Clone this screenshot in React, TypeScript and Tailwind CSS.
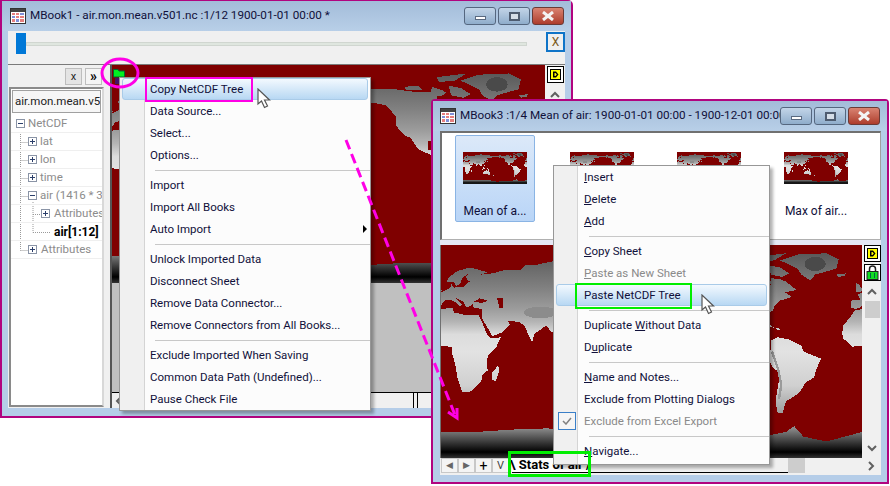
import type { ReactNode } from 'react';

type Pt = [number, number];

// rough coastlines in lon/lat, drawn twice so the map runs 0..360
const land: Pt[][] = [
  [[-9,37],[-9,43],[-1,44],[-4,48],[2,51],[8,54],[9,57],[11,54],[20,55],[24,59],[30,60],[23,60],[21,63],[24,66],[18,62],[17,58],[13,55],[11,59],[5,59],[6,62],[14,68],[25,71],[40,67],[34,65],[44,66],[55,69],[68,69],[72,73],[80,73],[100,77],[113,74],[130,71],[160,70],[180,69],[190,65],[178,62],[163,60],[156,52],[155,59],[142,59],[135,54],[141,52],[135,44],[128,40],[129,35],[126,35],[125,39],[121,40],[118,38],[122,31],[120,26],[110,21],[106,19],[109,13],[105,9],[100,13],[103,2],[100,5],[98,16],[94,17],[90,22],[80,15],[78,8],[73,18],[72,21],[67,25],[57,26],[59,23],[52,16],[44,13],[35,28],[35,36],[28,37],[27,40],[24,38],[22,37],[19,42],[13,45],[18,40],[16,38],[12,42],[8,44],[3,43],[0,39],[-2,37],[-6,36]],
  [[-6,35],[10,37],[11,33],[20,31],[32,31],[35,25],[39,15],[43,11],[51,12],[47,3],[40,-4],[39,-10],[40,-16],[35,-20],[35,-24],[30,-30],[25,-34],[18,-34],[14,-22],[12,-10],[9,0],[9,4],[-4,5],[-8,4],[-16,11],[-17,15],[-16,22],[-10,29]],
  [[49,-12],[50,-16],[47,-25],[44,-24],[44,-17]],
  [[-5,50],[1,51],[-2,56],[-5,58],[-5,54]],
  [[-22,65],[-14,66],[-15,64],[-20,63]],
  [[130,32],[136,34],[141,36],[141,41],[139,38],[132,35]],
  [[141,42],[145,44],[142,45]],
  [[95,5],[104,-3],[106,-6],[102,-4]],
  [[109,1],[116,7],[118,1],[115,-4],[110,-2]],
  [[105,-7],[115,-8],[114,-9],[106,-8]],
  [[120,0],[124,1],[122,-5],[120,-5]],
  [[131,-1],[141,-3],[148,-7],[150,-10],[141,-9],[133,-4]],
  [[120,18],[122,18],[125,8],[122,7]],
  [[114,-22],[122,-18],[129,-15],[131,-12],[136,-12],[136,-15],[140,-17],[142,-11],[146,-19],[153,-26],[150,-37],[145,-39],[138,-35],[131,-32],[124,-33],[115,-34]],
  [[173,-35],[178,-38],[175,-41],[168,-46],[167,-45],[172,-41]],
  [[-168,66],[-156,71],[-140,70],[-125,70],[-110,68],[-95,68],[-94,72],[-85,69],[-82,67],[-94,59],[-92,57],[-82,55],[-79,52],[-78,62],[-70,61],[-65,59],[-56,52],[-66,50],[-60,46],[-70,43],[-75,38],[-76,35],[-81,31],[-80,25],[-83,29],[-90,29],[-97,27],[-97,20],[-91,18],[-87,21],[-88,16],[-83,14],[-83,9],[-78,9],[-80,7],[-85,10],[-95,16],[-105,20],[-112,30],[-117,32],[-124,40],[-124,48],[-133,57],[-150,60],[-165,55],[-158,58],[-165,62]],
  [[-80,73],[-70,71],[-62,66],[-68,63],[-78,65]],
  [[-117,72],[-105,73],[-102,69],[-115,69]],
  [[-90,80],[-65,83],[-75,77],[-88,76]],
  [[-55,82],[-30,83],[-20,78],[-22,70],[-40,65],[-44,60],[-52,65],[-55,70],[-70,77]],
  [[-78,9],[-72,12],[-62,10],[-52,5],[-50,0],[-35,-6],[-39,-15],[-41,-22],[-48,-26],[-53,-34],[-58,-38],[-65,-42],[-68,-52],[-72,-52],[-74,-42],[-70,-18],[-76,-14],[-81,-5],[-78,2]],
  [[-84,22],[-75,20],[-78,22]],
  [[-74,20],[-69,19],[-72,18]],
];
const seas: Pt[][] = [
  [[28,42],[33,45],[40,43],[35,41]],
  [[48,45],[53,45],[53,37],[50,37]],
  [[-90,64],[-80,64],[-78,56],[-90,58]],
];
const antarctica: Pt[] = [[0,-68],[30,-68],[60,-66],[90,-65],[120,-66],[150,-68],[165,-72],[190,-77],[230,-74],[270,-73],[295,-68],[302,-63],[310,-72],[330,-76],[345,-72],[360,-68],[360,-90],[0,-90]];

const pts = (p: Pt[]) => p.map(([lon, lat]) => `${lon},${90 - lat}`).join(' ');

function WorldMap() {
  return (
    <svg viewBox="0 0 360 180" preserveAspectRatio="none" shapeRendering="crispEdges" className="block w-full h-full bg-[#7f0000]">
      <defs>
        <linearGradient id="landFill" gradientUnits="userSpaceOnUse" x1="0" y1="0" x2="0" y2="180">
          <stop offset="0.04" stopColor="#5a5a5a" />
          <stop offset="0.2" stopColor="#808080" />
          <stop offset="0.3" stopColor="#9c9c9c" />
          <stop offset="0.36" stopColor="#b4b4b4" />
          <stop offset="0.42" stopColor="#dcdcdc" />
          <stop offset="0.5" stopColor="#e2e2e2" />
          <stop offset="0.66" stopColor="#d0d0d0" />
          <stop offset="0.8" stopColor="#999999" />
        </linearGradient>
        <linearGradient id="iceFill" gradientUnits="userSpaceOnUse" x1="0" y1="155" x2="0" y2="180">
          <stop offset="0" stopColor="#8a8a8a" />
          <stop offset="0.5" stopColor="#333333" />
          <stop offset="0.8" stopColor="#000000" />
          <stop offset="1" stopColor="#333333" />
        </linearGradient>
      </defs>
      {[0, 360].map((shift) => (
        <g key={shift} transform={`translate(${shift})`}>
          {land.map((p, i) => <polygon key={i} points={pts(p)} fill="url(#landFill)" />)}
          {seas.map((p, i) => <polygon key={i} points={pts(p)} fill="#7f0000" />)}
          <ellipse cx="85" cy="57" rx="14" ry="5" fill="#8c8c8c" />
          <ellipse cx="-40" cy="16" rx="9" ry="6" fill="#4a4a4a" />
          <polyline points={pts([[-77,0],[-72,-14],[-69,-28],[-71,-40]])} fill="none" stroke="#9a9a9a" strokeWidth="2" />
        </g>
      ))}
      <polygon points={pts(antarctica)} fill="url(#iceFill)" />
    </svg>
  );
}

function BookIcon() {
  return (
    <svg width="16" height="16" viewBox="0 0 16 16" className="shrink-0">
      <rect x="0.5" y="0.5" width="15" height="15" fill="#fff" stroke="#333" />
      <rect x="1" y="1" width="14" height="3" fill="#444" />
      <rect x="2" y="5" width="3" height="2" fill="#e57f7f" /><rect x="6" y="5" width="3" height="2" fill="#e57f7f" /><rect x="10" y="5" width="4" height="2" fill="#7f8fd8" />
      <rect x="2" y="8" width="3" height="2" fill="#7f8fd8" /><rect x="6" y="8" width="3" height="2" fill="#e57f7f" /><rect x="10" y="8" width="4" height="2" fill="#e57f7f" />
      <rect x="2" y="11" width="3" height="3" fill="#e57f7f" /><rect x="6" y="11" width="3" height="3" fill="#7f8fd8" /><rect x="10" y="11" width="4" height="3" fill="#e57f7f" />
    </svg>
  );
}

function WinButtons({ gapClass }: { gapClass: string }) {
  return (
    <div className={`flex ${gapClass} shrink-0`}>
      <div className="w-[32px] h-[18px] rounded-[3px] border border-[#55677f] bg-gradient-to-b from-[#c3d5e8] to-[#8fadcb] flex items-center justify-center">
        <div className="w-[11px] h-[4px] mt-[4px] bg-white border border-[#5a6a80]" />
      </div>
      <div className="w-[32px] h-[18px] rounded-[3px] border border-[#55677f] bg-gradient-to-b from-[#c3d5e8] to-[#8fadcb] flex items-center justify-center">
        <div className="w-[11px] h-[9px] bg-[#d5dee8] border-2 border-[#4e5c70]" />
      </div>
      <div className="w-[32px] h-[18px] rounded-[3px] border border-[#6b3a36] bg-gradient-to-b from-[#d98372] to-[#ad3c2c] flex items-center justify-center">
        <svg width="14" height="10" viewBox="0 0 14 10"><path d="M2 1 L12 9 M12 1 L2 9" stroke="#f4f4f4" strokeWidth="3" /></svg>
      </div>
    </div>
  );
}

function DButton({ className }: { className: string }) {
  return (
    <div className={`w-[17px] h-[17px] bg-white border border-black flex items-center justify-center ${className}`}>
      <svg width="11" height="11" viewBox="0 0 11 11">
        <rect x="0.5" y="0.5" width="10" height="10" fill="#ffff00" stroke="#000" />
        <path d="M3 2.5 H6 L8.5 5.5 L6 8.5 H3 Z M4.5 4 V7 H5.5 L6.8 5.5 L5.5 4 Z" fill="#000" fillRule="evenodd" />
      </svg>
    </div>
  );
}

function LockButton() {
  return (
    <div className="w-[17px] h-[17px] bg-white border border-black flex items-center justify-center">
      <svg width="13" height="15" viewBox="0 0 13 15">
        <path d="M3.5 7 V4 A3 3 0 0 1 9.5 4 V7" fill="none" stroke="#222" strokeWidth="1.5" />
        <rect x="1" y="6.5" width="11" height="8" fill="#11dd22" stroke="#222" />
        <path d="M4.5 8 V13 M8.5 8 V13" stroke="#064" />
      </svg>
    </div>
  );
}

function Chevron({ dir, className }: { dir: 'up' | 'down' | 'left' | 'right'; className?: string }) {
  const d = { up: 'M1 6 L5 2 L9 6', down: 'M1 2 L5 6 L9 2', left: 'M6 1 L2 5 L6 9', right: 'M2 1 L6 5 L2 9' }[dir];
  return (
    <svg width="10" height="10" viewBox="0 0 10 10" className={className}>
      <path d={d} fill="none" stroke="#606060" strokeWidth="2" />
    </svg>
  );
}

function PlusBox({ minus }: { minus?: boolean }) {
  return (
    <span className="relative w-[9px] h-[9px] border border-[#8a94a6] bg-white shrink-0 flex items-center justify-center">
      <span className="w-[5px] h-px bg-[#2b3f6b]" />
      {!minus && <span className="absolute w-px h-[5px] bg-[#2b3f6b]" />}
    </span>
  );
}

const treeRows = [
  { label: 'NetCDF', box: 'minus', pad: 'pl-[5px]', gap: 'gap-[3px]' },
  { label: 'lat', box: 'plus', pad: 'pl-[17px]', gap: 'gap-[3px]' },
  { label: 'lon', box: 'plus', pad: 'pl-[17px]', gap: 'gap-[3px]' },
  { label: 'time', box: 'plus', pad: 'pl-[17px]', gap: 'gap-[3px]' },
  { label: 'air (1416 * 36', box: 'minus', pad: 'pl-[17px]', gap: 'gap-[3px]' },
  { label: 'Attributes', box: 'plus', pad: 'pl-[30px]', gap: 'gap-[4px]' },
  { label: 'air[1:12]', box: 'none', pad: 'pl-[43px]', gap: '' },
  { label: 'Attributes', box: 'plus', pad: 'pl-[17px]', gap: 'gap-[4px]' },
];

function TreePanel() {
  return (
    <div className="w-[97px] h-full shrink-0 bg-[#f0f0f0] flex flex-col pl-[1px]">
      <div className="h-[22px] shrink-0 flex items-center justify-end gap-[3px] pr-[3px]">
        <div className="w-[17px] h-[17px] bg-[#e4e4e4] border border-[#bdbdbd] flex items-center justify-center text-[11px] leading-none text-[#222]">x</div>
        <div className="w-[17px] h-[17px] bg-[#f4f4f4] border border-[#bdbdbd] flex items-center justify-center text-[14px] leading-none font-bold text-black">»</div>
      </div>
      <div className="flex-1 border-2 border-[#8a8a8a] border-r-[#d8d8d8] mr-[1px] mb-[1px] bg-white flex flex-col overflow-hidden">
        <div className="h-[23px] shrink-0 mx-[1px] mt-[1px] border border-[#a0a0a0] bg-[#f6f6f6] flex items-center overflow-hidden whitespace-nowrap pl-[2px] text-[11.5px] text-[#222]">air.mon.mean.v501.nc</div>
        <div className="relative pt-[1px] mt-[1px] overflow-hidden">
          <svg width="90" height="150" className="absolute left-0 top-0" fill="none" stroke="#9a9a9a" strokeDasharray="1 1">
            <path d="M9.5 18 V136.5 M9.5 28.5 H17 M9.5 46.5 H17 M9.5 64.5 H17 M9.5 82.5 H17 M9.5 136.5 H17 M22 88 V118.5 M22 100.5 H30 M22 118.5 H40" />
          </svg>
          {treeRows.map((r, i) => (
            <div key={i} className={`relative h-[18px] flex items-center border-b border-[#efefef] whitespace-nowrap text-[11.5px] ${r.pad} ${r.gap}`}>
              {r.box !== 'none' && <PlusBox minus={r.box === 'minus'} />}
              <span className={r.box === 'none' ? 'font-bold text-[12px] text-black' : 'text-[#8c8c8c]'}>{r.label}</span>
            </div>
          ))}
        </div>
      </div>
    </div>
  );
}

type MenuItem = { label: ReactNode; gray?: boolean; hot?: boolean; arrow?: boolean; check?: boolean; sep?: boolean };

function Menu({ items, className, gutter }: { items: MenuItem[]; className: string; gutter: string }) {
  return (
    <div className={`absolute bg-[#fcfcfc] border border-[#979797] shadow-[3px_3px_3px_rgba(0,0,0,0.3)] text-[11.5px] text-[#10103a] ${className}`}>
      <div className={`absolute left-0 top-0 bottom-0 bg-[#f0f0f0] border-r border-[#d4d4d4] ${gutter}`} />
      {items.map((it, i) =>
        it.sep ? (
          <div key={i} className="relative h-[8px] flex items-center pl-[35px]"><div className="h-px w-full bg-[#c8c8c8]" /></div>
        ) : (
          <div
            key={i}
            className={`relative h-[22px] flex items-center whitespace-nowrap ${it.gray ? 'text-[#8a8a8a]' : ''} ${
              it.hot ? 'mx-[2px] pl-[27px] rounded-[3px] border border-[#a9cbe8] bg-gradient-to-b from-[#f3f9fe] to-[#b8d8f3]' : 'pl-[30px]'
            }`}
          >
            {it.check && (
              <span className="absolute left-[4px] top-[2px] w-[18px] h-[18px] border border-[#3a7fc8] bg-[#f5f5f5] flex items-center justify-center">
                <svg width="10" height="8" viewBox="0 0 10 8"><path d="M1 4 L4 7 L9 1" fill="none" stroke="#808080" strokeWidth="1.5" /></svg>
              </span>
            )}
            <span className="relative top-[1px]">{it.label}</span>
            {it.arrow && <span className="absolute right-[3px] w-0 h-0 border-y-[4px] border-y-transparent border-l-[4px] border-l-black" />}
          </div>
        ),
      )}
    </div>
  );
}

const menuOne: MenuItem[] = [
  { label: 'Copy NetCDF Tree', hot: true },
  { label: 'Data Source...' },
  { label: 'Select...' },
  { label: 'Options...' },
  { label: '', sep: true },
  { label: 'Import' },
  { label: 'Import All Books' },
  { label: 'Auto Import', arrow: true },
  { label: '', sep: true },
  { label: 'Unlock Imported Data' },
  { label: 'Disconnect Sheet' },
  { label: 'Remove Data Connector...' },
  { label: 'Remove Connectors from All Books...' },
  { label: '', sep: true },
  { label: 'Exclude Imported When Saving' },
  { label: 'Common Data Path (Undefined)...' },
  { label: 'Pause Check File' },
];

const menuTwo: MenuItem[] = [
  { label: <><u>I</u>nsert</> },
  { label: <><u>D</u>elete</> },
  { label: <><u>A</u>dd</> },
  { label: '', sep: true },
  { label: <><u>C</u>opy Sheet</> },
  { label: <><u>P</u>aste as New Sheet</>, gray: true },
  { label: 'Paste NetCDF Tree', hot: true },
  { label: '', sep: true },
  { label: <>Duplicate <u>W</u>ithout Data</> },
  { label: <>D<u>u</u>plicate</> },
  { label: '', sep: true },
  { label: <><u>N</u>ame and Notes...</> },
  { label: 'Exclude from Plotting Dialogs' },
  { label: 'Exclude from Excel Export', gray: true, check: true },
  { label: '', sep: true },
  { label: <><u>N</u>avigate...</> },
];

// the two middle captions sit behind the context menu
const thumbs = ['Mean of a...', '', '', 'Max of air...'];

function Cursor({ className }: { className: string }) {
  return (
    <svg width="16" height="21" viewBox="0 0 16 21" className={`absolute ${className}`}>
      <path d="M1 1 V16 L4.5 13 L7.5 19.5 L10.5 18 L7.5 12 H12.5 Z" fill="#fff" stroke="#555" strokeWidth="1.2" />
    </svg>
  );
}

export default function App() {
  return (
    <div className="relative w-[890px] h-[486px] bg-white overflow-hidden text-[#10103a] [font-family:Roboto,'Noto_Sans',sans-serif]">
      {/* MBook1 */}
      <div className="absolute left-0 top-0 w-[573px] h-[418px] border-2 border-t-[1px] border-[#b1047f] rounded-tr-[5px] bg-[#b5cde8] flex flex-col">
        <div className="h-[30px] shrink-0 bg-gradient-to-b from-[#a3bcd9] to-[#b8cfe8] flex items-center pl-[8px] pr-[7px]">
          <BookIcon />
          <span className="ml-[4px] flex-1 whitespace-nowrap text-[11.7px]">MBook1 - air.mon.mean.v501.nc :1/12 1900-01-01 00:00 *</span>
          <WinButtons gapClass="gap-[2px]" />
        </div>
        <div className="flex-1 mx-[6px] mb-[8px] flex flex-col min-h-0">
          <div className="h-[34px] shrink-0 bg-[#f0f0f0] border-b border-[#7a7a7a] flex items-start pl-[8px]">
            <div className="w-[10px] h-[21px] mt-[2px] bg-[#0078d7]" />
            <div className="flex-1 h-[4px] mt-[11px] bg-[#dfe6df] border border-[#d0d6d0]" />
            <div className="ml-[19px] w-[19px] h-[20px] mt-[1px] border-2 border-[#0f74c8] flex items-center justify-center text-[12px] text-[#7a5a1a]">X</div>
          </div>
          <div className="flex-1 flex min-h-0">
            <TreePanel />
            <div className="w-[5px] shrink-0 bg-[#f0f0f0]" />
            <div className="flex-1 min-w-0 flex flex-col border-l-2 border-[#555]">
              <div className="h-[218px] shrink-0"><WorldMap /></div>
              <div className="flex-1 bg-[#c0c0c0]" />
              <div className="h-[16px] shrink-0 bg-[#f0f0f0] border-t border-black flex items-center pl-[3px]">
                <Chevron dir="left" />
                <div className="ml-auto mr-[127px] w-[5px] h-full border-x border-black" />
              </div>
            </div>
            <div className="w-[20px] shrink-0 bg-[#f0f0f0] flex flex-col items-center">
              <DButton className="mt-[1px]" />
              <Chevron dir="up" className="mt-[8px]" />
            </div>
          </div>
        </div>
      </div>

      {/* folder button sitting on the first map */}
      <svg width="12" height="16" viewBox="0 0 12 16" className="absolute left-[113px] top-[69px]">
        <path d="M0.5 0.5 H5 L6 2 H11.5 V8 H0.5 Z" fill="#00f020" stroke="#063" />
        <path d="M2 10 H6 M2 12 H6 M2 14 H6" stroke="#1020d0" />
      </svg>

      <Menu items={menuOne} className="left-[119px] top-[77px] w-[252px] h-[334px]" gutter="w-[25px]" />
      <Cursor className="left-[257px] top-[88px]" />

      {/* MBook3 */}
      <div className="absolute left-[431px] top-[99px] w-[458px] h-[385px] border-2 border-[#b1047f] rounded-t-[4px] bg-[#b5cde8] flex flex-col">
        <div className="h-[30px] shrink-0 bg-gradient-to-b from-[#a3bcd9] to-[#b8cfe8] flex items-center pl-[7px] pr-[7px]">
          <BookIcon />
          <span className="ml-[4px] flex-1 min-w-0 overflow-hidden whitespace-nowrap text-[11.7px]">MBook3 :1/4 Mean of air: 1900-01-01 00:00 - 1900-12-01 00:00</span>
          <WinButtons gapClass="gap-[2px]" />
        </div>
        <div className="flex-1 ml-[7px] mr-[6px] mb-[7px] flex flex-col min-h-0">
          <div className="h-[109px] shrink-0 bg-white border-t-2 border-l-2 border-r border-b border-t-[#707070] border-l-[#707070] border-r-[#a0a0a0] border-b-[#b0b0b0] flex gap-[27px] pl-[13px] pt-[2px]">
            {thumbs.map((t, i) => (
              <div key={i} className={`w-[80px] h-[87px] shrink-0 flex flex-col items-center pt-[16px] rounded-[2px] ${i === 0 ? 'border border-[#8ab4e4] bg-gradient-to-b from-[#dce9f9] to-[#b9d5f7]' : 'border border-transparent'}`}>
                <div className="w-[64px] h-[32px] shrink-0"><WorldMap /></div>
                <span className="mt-[18px] text-[12px] leading-[18px] whitespace-nowrap">{t}</span>
              </div>
            ))}
          </div>
          <div className="h-[5px] shrink-0 bg-[#e6e8f5]" />
          <div className="h-[213px] shrink-0 flex">
            <div className="flex-1 min-w-0 border-l border-[#707070]"><WorldMap /></div>
            <div className="w-[19px] shrink-0 bg-[#f0f0f0] flex flex-col items-center gap-[2px] pl-[1px]">
              <DButton className="" />
              <LockButton />
              <Chevron dir="up" className="mt-[5px]" />
              <div className="w-[15px] h-[17px] mt-[1px] bg-[#cdcdcd]" />
              <Chevron dir="down" className="mt-[124px]" />
            </div>
          </div>
          <div className="h-[17px] shrink-0 bg-[#f0f0f0] flex items-start pl-[1px]">
            {['◀', '▶', '+', 'V'].map((b) => (
              <div key={b} className={`w-[17px] h-[15px] border border-[#c8c8c8] bg-[#f4f4f4] flex items-center justify-center leading-none ${b === '+' ? 'text-[14px] text-black' : b === 'V' ? 'text-[11px] text-[#444]' : 'text-[9px] text-[#666]'}`}>{b}</div>
            ))}
            <div className="ml-[3px] w-[77px] h-[15px] bg-white border-b border-black flex items-center justify-center text-[13px] font-bold text-black whitespace-nowrap">\ Stats of air /</div>
            <div className="flex-1 h-[15px] border-b border-black" />
            <div className="w-[93px] h-[15px] flex items-center">
              <div className="w-[17px] h-[15px] bg-[#cdcdcd]" />
              <Chevron dir="right" className="ml-[62px]" />
            </div>
          </div>
        </div>
      </div>

      <Menu items={menuTwo} className="left-[553px] top-[165px] w-[217px] h-[300px]" gutter="w-[24px]" />
      <Cursor className="left-[701px] top-[294px]" />

      {/* callouts */}
      <svg width="890" height="486" className="absolute left-0 top-0 pointer-events-none" fill="none">
        <ellipse cx="120" cy="73" rx="18" ry="14" stroke="#ff00e6" strokeWidth="3" />
        <rect x="146" y="78" width="106" height="23" stroke="#ff00e6" strokeWidth="2" />
        <path d="M346 140 L455 415" stroke="#ff00e6" strokeWidth="3" strokeDasharray="10 5" />
        <path d="M448 412 L457 418 L457 408" stroke="#ff00e6" strokeWidth="3" />
        <rect x="576" y="284" width="115" height="24" stroke="#00ee00" strokeWidth="2" />
        <rect x="509.5" y="452.5" width="80" height="23" stroke="#00ee00" strokeWidth="3" />
      </svg>
    </div>
  );
}
